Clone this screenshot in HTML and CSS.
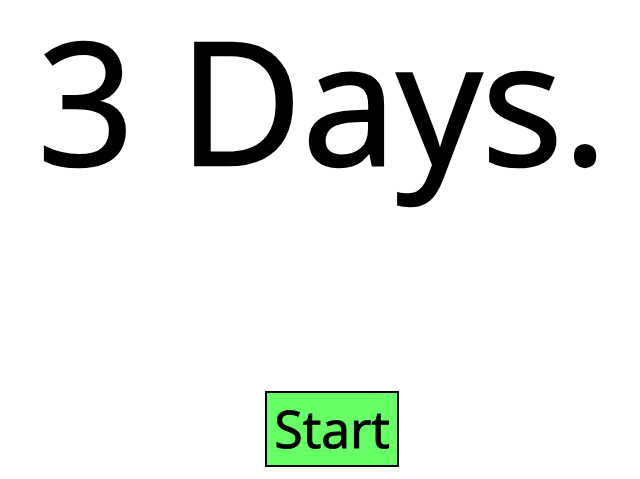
FILE: index.html
```html
<!DOCTYPE html>
<html>
<head>
<meta charset="utf-8">
<link rel="stylesheet" href="styles.css">
</head>
<body>
<main class="page">
  <h1 class="title">3 Days.</h1>
  <div class="actions">
    <button class="start">Start</button>
  </div>
</main>
</body>
</html>
```
FILE: styles.css
```css
html, body {
  margin: 0;
  padding: 0;
  background: #ffffff;
}
.page {
  width: 640px;
  height: 479px;
  display: flex;
  flex-direction: column;
  font-family: "Open Sans", "Noto Sans", sans-serif;
  color: #000;
}
.title {
  margin: -11px 0 0 0;
  font-size: 170px;
  font-weight: 400;
  line-height: 220px;
  text-align: center;
  padding-left: 5px;
  white-space: nowrap;
  -webkit-text-stroke: 2.5px #000;
}
.actions {
  display: flex;
  padding-left: 265px;
  margin-top: 182px;
}
.start {
  box-sizing: border-box;
  width: 134px;
  height: 76px;
  background: #66ff66;
  border: 2px solid #000;
  border-radius: 0;
  padding: 0 0 2px 0;
  font-family: "Open Sans", "Noto Sans", sans-serif;
  font-size: 52px;
  font-weight: 400;
  color: #000;
  line-height: 1;
  -webkit-text-stroke: 1px #000;
}
```
